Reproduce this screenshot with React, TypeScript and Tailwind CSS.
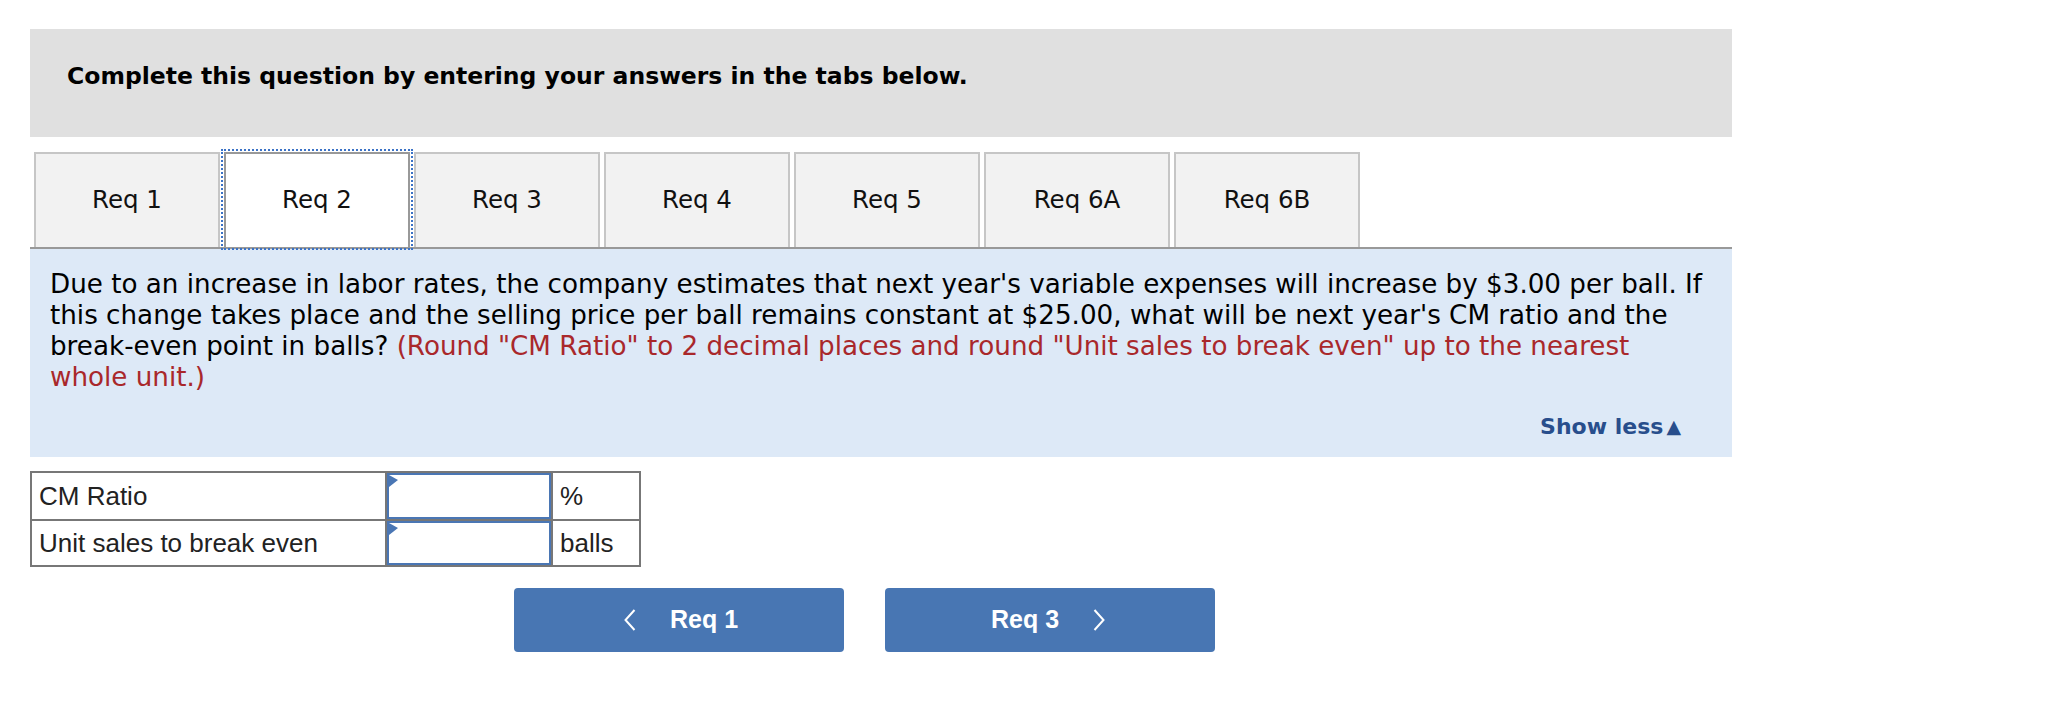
import React from 'react';

const tabs = ['Req 1', 'Req 2', 'Req 3', 'Req 4', 'Req 5', 'Req 6A', 'Req 6B'];
const active = 'Req 2';

const verdana = "font-['DejaVu_Sans',Verdana,sans-serif]";
const arial = "font-['Liberation_Sans',Arial,sans-serif]";

const Chevron = ({ dir }: { dir: 'left' | 'right' }) => (
  <svg width="12" height="22" viewBox="0 0 12 22" fill="none">
    <polyline
      points={dir === 'left' ? '10.5,1 1.5,11 10.5,21' : '1.5,1 10.5,11 1.5,21'}
      stroke="white"
      strokeWidth="2"
      strokeLinejoin="miter"
    />
  </svg>
);

const InputCell = () => (
  <div className="relative bg-white border-2 border-[#4a76b4]">
    {/* little marker in the corner of every answer box */}
    <svg className="absolute left-0 top-0" width="9" height="13" viewBox="0 0 9 13">
      <polygon points="0,0 9,5 0,12" fill="#4a76b4" />
    </svg>
  </div>
);

export default function App() {
  return (
    <div className="w-[2046px] h-[708px] bg-white">
      <div className="ml-[30px] pt-[29px] w-[1702px]">
        {/* instructions bar */}
        <div className="h-[108px] bg-[#e0e0e0] pl-[37px] pt-[32px]">
          <h2 className={`${verdana} text-[23.5px] leading-[30px] font-bold text-black`}>
            Complete this question by entering your answers in the tabs below.
          </h2>
        </div>

        {/* tabs */}
        <div className="mt-[15px] flex border-b-2 border-[#999999]">
          {tabs.map((t) => {
            const isActive = t === active;
            return (
              <div
                key={t}
                className={`ml-[4px] w-[186px] h-[95px] flex items-center justify-center border-2 border-b-0 ${verdana} text-[24.5px] text-[#111] ${
                  isActive
                    ? 'bg-white border-[#999999] outline-2 outline-dotted outline-[#3b72c6] outline-offset-1'
                    : 'bg-[#f2f2f2] border-[#c6c6c6]'
                }`}
              >
                {t}
              </div>
            );
          })}
        </div>

        {/* question panel */}
        <div className="bg-[#dde9f7] pt-[20px] pb-[15px] pl-[20px] pr-[51px]">
          <p className={`${verdana} text-[26.2px] leading-[31px] text-black whitespace-nowrap`}>
            Due to an increase in labor rates, the company estimates that next year's variable expenses will increase by $3.00 per ball. If
            <br />
            this change takes place and the selling price per ball remains constant at $25.00, what will be next year's CM ratio and the
            <br />
            break-even point in balls?{' '}
            <span className="text-[#a9282b]">
              (Round "CM Ratio" to 2 decimal places and round "Unit sales to break even" up to the nearest
              <br />
              whole unit.)
            </span>
          </p>
          <div className="mt-[18px] flex justify-end">
            <button className={`${verdana} text-[22px] leading-[31px] font-bold text-[#284e8c] flex items-center`}>
              Show less<span className="text-[19px] ml-[3px]">▲</span>
            </button>
          </div>
        </div>

        {/* answer grid */}
        <div
          className={`mt-[14px] w-[611px] grid grid-cols-[353px_164px_86px] grid-rows-[46px_44px] gap-[2px] p-[2px] bg-[#777777] ${arial} text-[26px] text-[#222]`}
        >
          <div className="bg-white pl-[7px] flex items-center">CM Ratio</div>
          <InputCell />
          <div className="bg-white pl-[7px] flex items-center">%</div>
          <div className="bg-white pl-[7px] flex items-center">Unit sales to break even</div>
          <InputCell />
          <div className="bg-white pl-[7px] flex items-center">balls</div>
        </div>

        {/* navigation */}
        <div className="mt-[21px] ml-[484px] flex gap-[41px]">
          <button
            className={`w-[330px] h-[64px] rounded-[4px] bg-[#4876b3] text-white ${arial} text-[25px] font-bold flex items-center justify-center gap-[34px] pl-[4px]`}
          >
            <Chevron dir="left" />
            <span>Req 1</span>
          </button>
          <button
            className={`w-[330px] h-[64px] rounded-[4px] bg-[#4876b3] text-white ${arial} text-[25px] font-bold flex items-center justify-center gap-[34px] pr-[4px]`}
          >
            <span>Req 3</span>
            <Chevron dir="right" />
          </button>
        </div>
      </div>
    </div>
  );
}
